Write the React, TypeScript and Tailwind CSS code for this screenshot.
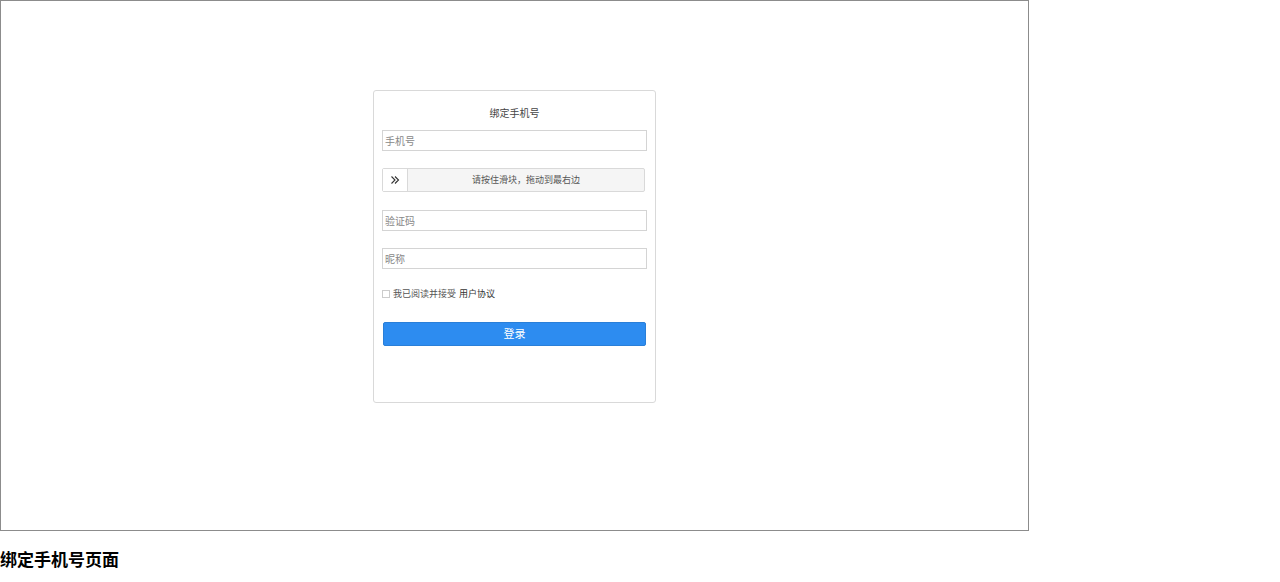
export default function App() {
  const font = { fontFamily: '"Noto Sans CJK SC", sans-serif' };
  return (
    <div style={font} className="bg-white">
      <div className="w-[1029px] h-[531px] border border-[#8c8c8c] pt-[89px]">
        <div className="mx-auto w-[283px] h-[313px] border border-[#d9d9d9] rounded-[3px] px-[8px] pt-[14px]">
          <div className="text-center text-[10px] text-[#444] leading-[16px]">绑定手机号</div>
          <input
            placeholder="手机号"
            className="mt-[9px] block w-[265px] h-[21px] border border-[#d4d4d4] px-[2px] text-[10px] placeholder:text-[#888] outline-none"
          />
          <div className="mt-[17px] flex w-[263px] h-[24px] border border-[#d9d9d9] rounded-[2px] bg-[#f5f5f5]">
            <div className="w-[25px] h-full bg-white border-r border-[#d9d9d9] flex items-center justify-center">
              <svg width="10" height="10" viewBox="0 0 10 10" fill="none" stroke="#333" strokeWidth="1.1">
                <path d="M1.5 1.5L5 5L1.5 8.5M5 1.5L8.5 5L5 8.5" />
              </svg>
            </div>
            <div className="flex-1 flex items-center justify-center text-[9px] text-[#555]">请按住滑块，拖动到最右边</div>
          </div>
          <input
            placeholder="验证码"
            className="mt-[18px] block w-[265px] h-[21px] border border-[#d4d4d4] px-[2px] text-[10px] placeholder:text-[#888] outline-none"
          />
          <input
            placeholder="昵称"
            className="mt-[17px] block w-[265px] h-[21px] border border-[#d4d4d4] px-[2px] text-[10px] placeholder:text-[#888] outline-none"
          />
          <div className="mt-[18px] flex items-center gap-[3px] text-[9px] text-[#555]">
            <span className="w-[8px] h-[8px] border border-[#ccc] inline-block" />
            <span>我已阅读并接受</span>
            <span className="text-[#333]">用户协议</span>
          </div>
          <button className="mt-[21px] ml-[1px] w-[263px] h-[24px] rounded-[2px] bg-[#2d8cf0] border border-[#2a7fd8] text-white text-[11px]">
            登录
          </button>
        </div>
      </div>
      <div className="mt-[17px] text-[17px] font-bold text-black leading-[22px]">绑定手机号页面</div>
    </div>
  );
}
